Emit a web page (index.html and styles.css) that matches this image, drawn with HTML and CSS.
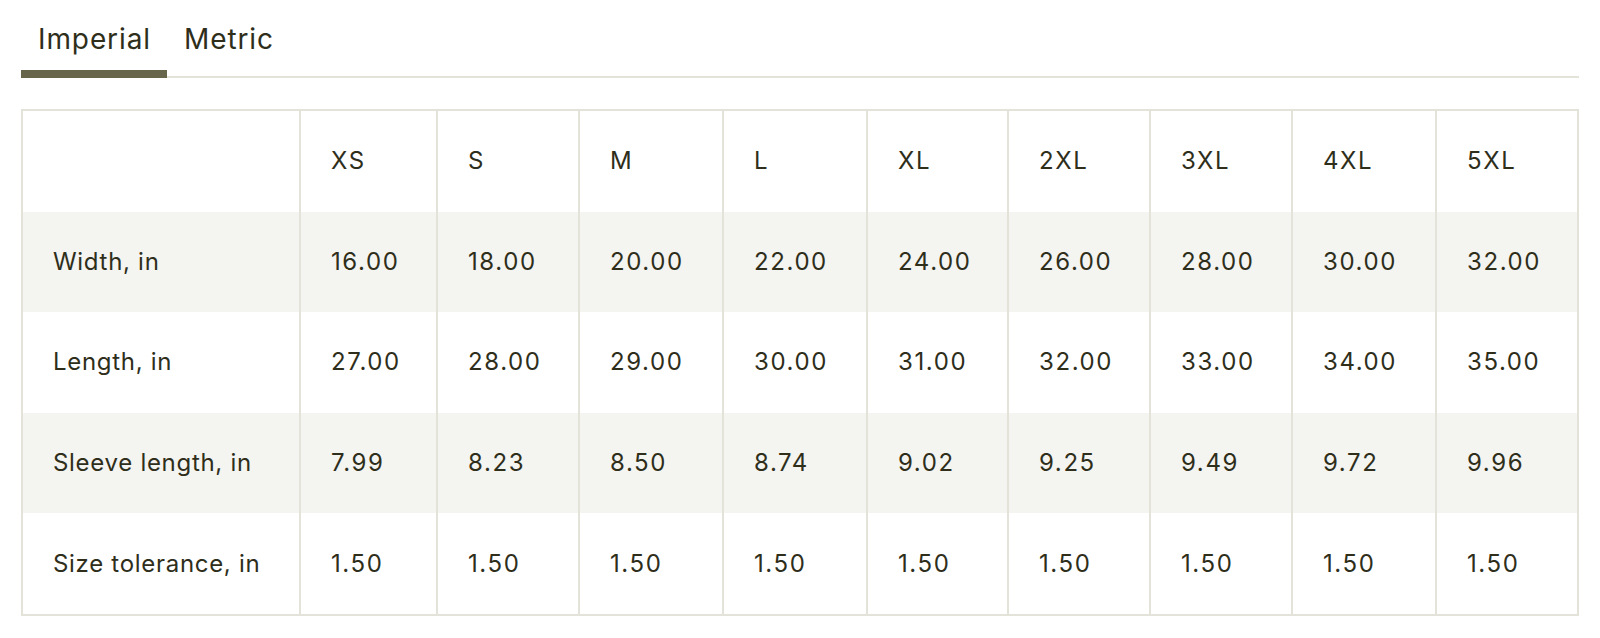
FILE: index.html
```html
<!DOCTYPE html>
<html lang="en">
<head>
<meta charset="utf-8">
<title>Size chart</title>
<link rel="stylesheet" href="styles.css">
</head>
<body>
<div class="page">
  <div class="tabs">
    <div class="tab tab-active">Imperial</div>
    <div class="tab">Metric</div>
  </div>
  <div class="chart">
    <div class="row row-head">
      <div class="cell"></div>
      <div class="cell val">XS</div>
      <div class="cell val">S</div>
      <div class="cell val">M</div>
      <div class="cell val">L</div>
      <div class="cell val">XL</div>
      <div class="cell val">2XL</div>
      <div class="cell val">3XL</div>
      <div class="cell val">4XL</div>
      <div class="cell val">5XL</div>
    </div>
    <div class="row row-shade">
      <div class="cell">Width, in</div>
      <div class="cell val">16.00</div>
      <div class="cell val">18.00</div>
      <div class="cell val">20.00</div>
      <div class="cell val">22.00</div>
      <div class="cell val">24.00</div>
      <div class="cell val">26.00</div>
      <div class="cell val">28.00</div>
      <div class="cell val">30.00</div>
      <div class="cell val">32.00</div>
    </div>
    <div class="row">
      <div class="cell">Length, in</div>
      <div class="cell val">27.00</div>
      <div class="cell val">28.00</div>
      <div class="cell val">29.00</div>
      <div class="cell val">30.00</div>
      <div class="cell val">31.00</div>
      <div class="cell val">32.00</div>
      <div class="cell val">33.00</div>
      <div class="cell val">34.00</div>
      <div class="cell val">35.00</div>
    </div>
    <div class="row row-shade">
      <div class="cell">Sleeve length, in</div>
      <div class="cell val">7.99</div>
      <div class="cell val">8.23</div>
      <div class="cell val">8.50</div>
      <div class="cell val">8.74</div>
      <div class="cell val">9.02</div>
      <div class="cell val">9.25</div>
      <div class="cell val">9.49</div>
      <div class="cell val">9.72</div>
      <div class="cell val">9.96</div>
    </div>
    <div class="row">
      <div class="cell">Size tolerance, in</div>
      <div class="cell val">1.50</div>
      <div class="cell val">1.50</div>
      <div class="cell val">1.50</div>
      <div class="cell val">1.50</div>
      <div class="cell val">1.50</div>
      <div class="cell val">1.50</div>
      <div class="cell val">1.50</div>
      <div class="cell val">1.50</div>
      <div class="cell val">1.50</div>
    </div>
  </div>
</div>
</body>
</html>
```
FILE: styles.css
```css
* { box-sizing: border-box; }
html, body { margin: 0; padding: 0; background: #ffffff; }
body {
  font-family: Inter, "Liberation Sans", sans-serif;
  color: #2e2e1b;
}
.page {
  padding: 0 21px;
}
.tabs {
  display: flex;
  padding-top: 23px;
  border-bottom: 2px solid #e4e3da;
}
.tab {
  font-size: 28px;
  line-height: 32px;
  letter-spacing: 0.9px;
  padding: 0 16px 15px 17px;
  margin-bottom: -2px;
  border-bottom: 8px solid transparent;
  color: #2e2e1b;
}
.tab-active {
  border-bottom-color: #67654a;
}
.chart {
  margin-top: 31px;
  border: 2px solid #e4e3da;
}
.row {
  display: grid;
  grid-template-columns: 276px 137px 142px 144px 144px 141px 142px 142px 144px 142px;
  height: 100.6px;
}
.row-shade {
  background: #f4f4f0;
}
.cell {
  display: flex;
  align-items: center;
  padding-left: 30px;
  font-size: 24px;
  line-height: 30px;
  letter-spacing: 0.7px;
  border-left: 2px solid #e4e3da;
  white-space: nowrap;
}
.cell:first-child {
  border-left: none;
}
.val {
  letter-spacing: 1.6px;
}
```
